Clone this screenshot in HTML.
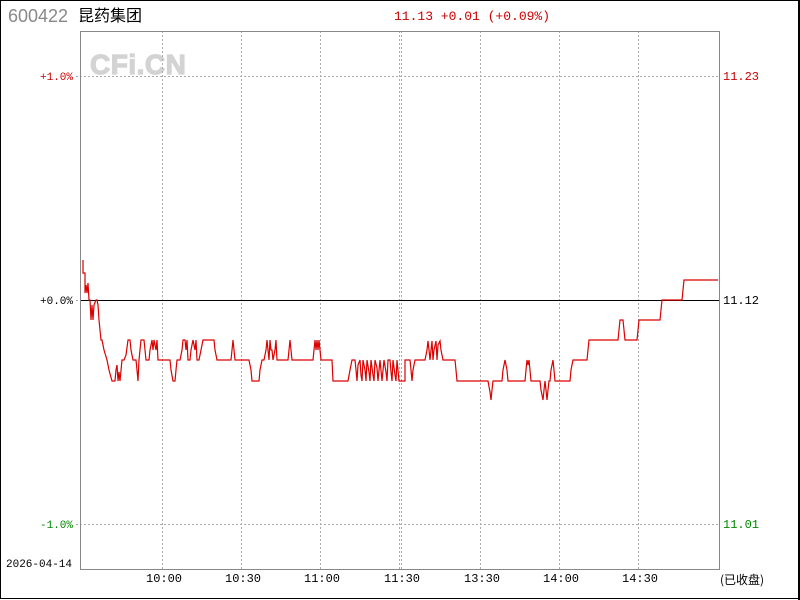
<!DOCTYPE html>
<html><head><meta charset="utf-8"><style>
html,body{margin:0;padding:0;background:#fff;}
#c{position:relative;width:800px;height:600px;overflow:hidden;}
svg text{font-family:"Liberation Mono","Noto Sans CJK SC",monospace;}
</style></head><body><div id="c">
<svg width="800" height="600" xmlns="http://www.w3.org/2000/svg">
<rect x="0.5" y="0.5" width="798" height="598" fill="#fff" stroke="#000" stroke-width="1"/>
<line x1="799" y1="0" x2="799" y2="600" stroke="#000" stroke-width="2"/>
<text x="8" y="22" font-size="18" fill="#888" style="font-family:'Liberation Sans',sans-serif">600422</text>
<text x="78" y="21" font-size="16" fill="#000" style="font-family:'Noto Sans CJK SC',sans-serif">昆药集团</text>
<text x="394" y="20" font-size="13" fill="#c00">11.13 +0.01 (+0.09%)</text>
<text x="90" y="74" font-size="28" fill="#d3d3d3" stroke="#d3d3d3" stroke-width="1.2" style="font-family:'Liberation Sans',sans-serif;font-weight:bold;letter-spacing:0.5px">CFi.CN</text>
<g stroke="#aaa" stroke-width="1" stroke-dasharray="2,2">
<line x1="162.5" y1="31" x2="162.5" y2="569"/>
<line x1="241.5" y1="31" x2="241.5" y2="569"/>
<line x1="320.5" y1="31" x2="320.5" y2="569"/>
<line x1="399.5" y1="31" x2="399.5" y2="569"/>
<line x1="401.5" y1="31" x2="401.5" y2="569"/>
<line x1="480.5" y1="31" x2="480.5" y2="569"/>
<line x1="559.5" y1="31" x2="559.5" y2="569"/>
<line x1="638.5" y1="31" x2="638.5" y2="569"/>
<line x1="76" y1="76.5" x2="720" y2="76.5"/>
<line x1="76" y1="524.5" x2="720" y2="524.5"/>
</g>
<line x1="76" y1="300.5" x2="80" y2="300.5" stroke="#aaa" stroke-dasharray="2,2"/>
<line x1="80" y1="300.5" x2="720" y2="300.5" stroke="#000" stroke-width="1"/>
<rect x="80.5" y="31.5" width="639" height="538" fill="none" stroke="#888" stroke-width="1"/>
<polyline fill="none" stroke="#d00" stroke-width="1.2" points="
83,260 83,273 85,273 85,293 86,285 87,293 88,283 89,300 90,300 91,320 92,305 93,320 94,305 96,300 97,300 98,305 99,320 100,330 101,340 102,340 104,350 107,360 109,370 112,381 115,381 116,370 117,365 118,381 119,372 120,381 122,360 124,360 126,355 128,340 130,340 131,350 133,360 136,360 137,370 138,381 139,360 141,340 144,340 145,350 146,360 149,360 150,350 152,340 153,350 154,340 156,350 157,340 158,360 170,360 171,370 173,381 175,381 176,370 177,360 180,360 182,350 183,340 185,340 186,350 187,340 188,360 190,360 191,350 193,340 195,350 196,340 197,360 199,360 201,350 203,340 214,340 215,350 217,360 231,360 232,350 233,340 234,350 235,360 249,360 251,370 252,381 259,381 260,370 262,360 264,360 266,350 267,340 268,350 269,360 270,340 271,350 272,350 273,360 275,350 276,340 277,360 288,360 289,350 290,340 292,360 313,360 314,350 315,340 316,350 317,340 318,350 319,340 320,350 321,360 332,360 333,381 348,381 350,370 352,360 355,360 356,370 357,381 358,365 360,360 361,375 362,381 363,360 365,370 366,381 367,360 369,372 370,381 371,360 373,375 374,381 375,360 377,368 378,381 380,360 382,381 384,360 386,372 387,381 388,360 390,360 391,372 392,381 393,360 395,375 396,381 397,360 399,381 405,381 405,360 410,360 411,370 412,381 413,370 415,360 425,360 427,350 428,341 429,350 430,360 431,350 432,341 433,360 434,350 436,341 437,360 438,345 440,341 441,350 443,360 455,360 456,370 457,381 488,381 490,392 491,400 492,390 493,381 502,381 503,370 505,360 507,370 508,381 525,381 526,370 527,360 528,365 529,360 530,370 531,381 540,381 541,390 543,400 544,390 545,381 546,390 547,400 548,390 549,381 550,381 551,370 553,360 554,370 555,381 558,381 570,381 571,370 573,360 587,360 588,350 589,340 618,340 619,330 620,320 623,320 624,330 625,340 637,340 638,330 639,320 660,320 661,310 662,300 682,300 683,290 684,280 718,280"/>
<g font-size="11">
<text x="40" y="80" fill="#c00">+1.0%</text>
<text x="40" y="304" fill="#000">+0.0%</text>
<text x="40" y="528" fill="#080">-1.0%</text>
<text x="723" y="80" fill="#c00" font-size="12">11.23</text>
<text x="723" y="304" fill="#000" font-size="12">11.12</text>
<text x="723" y="528" fill="#080" font-size="12">11.01</text>
<text x="6" y="567" fill="#000">2026-04-14</text>
<text x="146" y="582" fill="#000" font-size="12">10:00</text>
<text x="225" y="582" fill="#000" font-size="12">10:30</text>
<text x="304" y="582" fill="#000" font-size="12">11:00</text>
<text x="384" y="582" fill="#000" font-size="12">11:30</text>
<text x="464" y="582" fill="#000" font-size="12">13:30</text>
<text x="543" y="582" fill="#000" font-size="12">14:00</text>
<text x="622" y="582" fill="#000" font-size="12">14:30</text>
<text x="720" y="584" fill="#000" font-size="12" style="font-family:'Noto Sans CJK SC',sans-serif">(已收盘)</text>
</g>
</svg>
</div></body></html>
